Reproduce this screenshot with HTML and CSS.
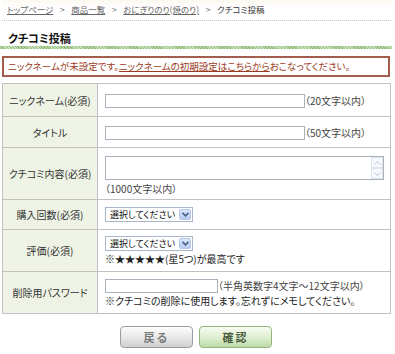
FILE: index.html
```html
<!DOCTYPE html>
<html lang="ja">
<head>
    <meta charset="UTF-8">
    <title>クチコミ投稿</title>
    <link rel="stylesheet" href="styles.css">
</head>
<body>
    <div id="page">
        <div id="crumbs">
            <a href="#">トップページ</a><span class="sep">&gt;</span><a href="#">商品一覧</a><span class="sep">&gt;</span><a href="#">おにぎりのり(焼のり)</a><span class="sep">&gt;</span><span>クチコミ投稿</span>
        </div>
        <h1 id="title">クチコミ投稿</h1>
        <div id="notice">ニックネームが未設定です。<a href="#">ニックネームの初期設定はこちらから</a>おこなってください。</div>

        <table id="form-table">
            <tr class="row-nick">
                <th>ニックネーム(必須)</th>
                <td><span class="text-input wide"></span><span class="note">（20文字以内）</span></td>
            </tr>
            <tr class="row-title">
                <th>タイトル</th>
                <td><span class="text-input wide"></span><span class="note">（50文字以内）</span></td>
            </tr>
            <tr class="row-body">
                <th>クチコミ内容(必須)</th>
                <td>
                    <div class="textarea">
                        <div class="scroll">
                            <span class="arrow up">
                                <svg width="7" height="4" viewBox="0 0 7 4"><path d="M0.5 3.5 L3.5 0.5 L6.5 3.5" fill="none" stroke="#b8c4d4" stroke-width="1"/></svg>
                            </span>
                            <span class="arrow down">
                                <svg width="7" height="4" viewBox="0 0 7 4"><path d="M0.5 0.5 L3.5 3.5 L6.5 0.5" fill="none" stroke="#b8c4d4" stroke-width="1"/></svg>
                            </span>
                        </div>
                    </div>
                    <div class="note-line">（1000文字以内）</div>
                </td>
            </tr>
            <tr class="row-count">
                <th>購入回数(必須)</th>
                <td>
                    <span class="select"><span class="select-text">選択してください</span><span class="drop"><svg width="7" height="5" viewBox="0 0 7 5"><path d="M0.5 0.8 L3.5 3.8 L6.5 0.8" fill="none" stroke="#4d6185" stroke-width="1.6"/></svg></span></span>
                </td>
            </tr>
            <tr class="row-rate">
                <th>評価(必須)</th>
                <td>
                    <span class="select"><span class="select-text">選択してください</span><span class="drop"><svg width="7" height="5" viewBox="0 0 7 5"><path d="M0.5 0.8 L3.5 3.8 L6.5 0.8" fill="none" stroke="#4d6185" stroke-width="1.6"/></svg></span></span>
                    <div class="note-line dark">※★★★★★(星5つ)が最高です</div>
                </td>
            </tr>
            <tr class="row-pass">
                <th>削除用パスワード</th>
                <td>
                    <div class="pass-line"><span class="text-input short"></span><span class="note">（半角英数字4文字〜12文字以内）</span></div>
                    <div class="note-line dark">※クチコミの削除に使用します。忘れずにメモしてください。</div>
                </td>
            </tr>
        </table>

        <div id="buttons">
            <button class="btn back">戻る</button>
            <button class="btn confirm">確認</button>
        </div>
    </div>
</body>
</html>
```

FILE: styles.css
```css
body {
    margin: 0;
    padding: 0;
    background-color: #ffffff;
    font-family: "Noto Sans CJK JP", "Noto Sans", sans-serif;
    font-feature-settings: "palt";
    font-size: 10px;
    color: #333333;
}
#page {
    width: 395px;
}
#crumbs {
    height: 20px;
    line-height: 19px;
    padding-left: 5px;
    margin: 0 4px 0 2px;
    border-bottom: 1px dotted #c4c4c4;
    font-size: 8.5px;
    color: #333333;
    background: linear-gradient(to bottom, #fbf9ef, #ffffff 40%);
}
#crumbs a {
    color: #666666;
    text-decoration: underline;
}
#crumbs .sep {
    display: inline-block;
    width: 18px;
    text-align: center;
    color: #777777;
}
#title {
    margin: 0 3px 0 0;
    padding: 9px 0 0 8px;
    height: 16px;
    line-height: 16px;
    font-size: 11px;
    font-weight: bold;
    color: #111111;
    border-bottom: 3px solid #98c584;
    border-image: repeating-linear-gradient(45deg, #8dbd77 0, #8dbd77 1px, #c9e2bb 1px, #c9e2bb 2px) 3;
}
#notice {
    margin: 7px 5px 0 2px;
    height: 17px;
    line-height: 17px;
    padding-left: 4px;
    border: 2px solid #a35e4e;
    color: #9c3a22;
    font-size: 9.5px;
}
#notice a {
    color: #9c3a22;
    text-decoration: underline;
}
#form-table {
    margin: 6px 0 0 2px;
    width: 389px;
    border-collapse: collapse;
    border: 1px solid #bdbdbd;
}
#form-table th {
    width: 94px;
    background-color: #eef3e5;
    border: 1px solid #c2c2c2;
    font-weight: normal;
    font-size: 10px;
    color: #333333;
    text-align: center;
    padding: 0;
}
#form-table td {
    border: 1px solid #c2c2c2;
    padding: 0 0 0 7px;
    vertical-align: middle;
    line-height: 13px;
}
.row-nick { height: 33px; }
.row-title { height: 31px; }
.row-body { height: 52px; }
.row-count { height: 30px; }
.row-rate { height: 42px; }
.row-pass { height: 42px; }
.row-body td, .row-rate td, .row-pass td {
    padding-top: 2px;
}
.text-input {
    display: inline-block;
    vertical-align: middle;
    height: 12px;
    border: 1px solid #a9b3bd;
    background-color: #ffffff;
}
.text-input.wide { width: 198px; }
.text-input.short { width: 111px; }
.note {
    vertical-align: middle;
    color: #444444;
    white-space: nowrap;
}
.pass-line {
    display: flex;
    align-items: center;
    height: 15px;
}
.note-line {
    color: #444444;
    margin-top: 2px;
    white-space: nowrap;
}
.note-line.dark {
    color: #222222;
    margin-top: 1px;
}
.textarea {
    width: 277px;
    height: 22px;
    border: 1px solid #a9b3bd;
    display: flex;
    justify-content: flex-end;
    margin-top: 4px;
}
.scroll {
    width: 12px;
    display: flex;
    flex-direction: column;
    justify-content: space-between;
    background-color: #f2f4f8;
}
.arrow {
    height: 10px;
    display: flex;
    align-items: center;
    justify-content: center;
    border: 1px solid #dde3ec;
    background-color: #f7f9fc;
}
.select {
    display: inline-flex;
    align-items: center;
    justify-content: space-between;
    width: 82px;
    height: 13px;
    padding-left: 4px;
    border: 1px solid #a9b7c9;
    color: #111111;
    vertical-align: middle;
}
.select-text {
    font-size: 9px;
    line-height: 13px;
    white-space: nowrap;
}
.drop {
    width: 12px;
    height: 11px;
    margin-right: 1px;
    border-radius: 2px;
    background: linear-gradient(to bottom, #d9e6fb, #b7cdf3);
    border: 1px solid #b3c6e8;
    box-sizing: border-box;
    display: flex;
    align-items: center;
    justify-content: center;
}
#buttons {
    display: flex;
    justify-content: center;
    gap: 6px;
    margin-top: 12px;
    padding-right: 3px;
}
.btn {
    width: 73px;
    height: 22px;
    border-radius: 4px;
    font-family: "Noto Sans CJK JP", sans-serif;
    font-size: 11px;
    font-weight: bold;
    letter-spacing: 2px;
    cursor: pointer;
    padding: 0;
}
.btn.back {
    color: #777777;
    border: 1px solid #9d9d9d;
    background: linear-gradient(to bottom, #fdfdfd, #e4e4e4 60%, #cfcfcf);
}
.btn.confirm {
    color: #4a5a40;
    border: 1px solid #93b57f;
    background: linear-gradient(to bottom, #f7fcf3, #daedcb 60%, #bcdba5);
}
```
